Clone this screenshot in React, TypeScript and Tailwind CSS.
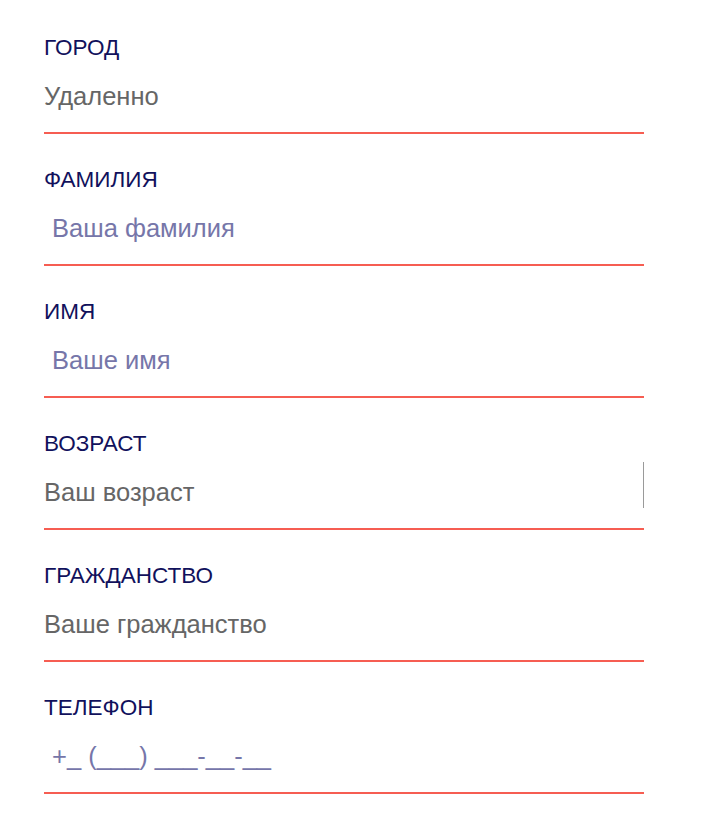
import React from "react";

type Field = {
  label: string;
  value?: string;
  placeholder?: string;
  indent?: boolean;
  divider?: boolean;
};

const fields: Field[] = [
  { label: "ГОРОД", value: "Удаленно" },
  { label: "ФАМИЛИЯ", placeholder: "Ваша фамилия", indent: true },
  { label: "ИМЯ", placeholder: "Ваше имя", indent: true },
  { label: "ВОЗРАСТ", value: "Ваш возраст", divider: true },
  { label: "ГРАЖДАНСТВО", value: "Ваше гражданство" },
  { label: "ТЕЛЕФОН", placeholder: "+_ (___) ___-__-__", indent: true },
];

export default function App() {
  return (
    <div
      className="min-h-[817px] w-full bg-white pt-[2px] pl-[44px]"
      style={{ fontFamily: '"Liberation Sans", Arial, sans-serif' }}
    >
      <div className="flex w-[600px] flex-col">
        {fields.map((f) => (
          <div
            key={f.label}
            className="relative flex h-[132px] flex-col border-b-2 border-[#f65d52] pt-[33px]"
          >
            <div className="h-[26px] text-[22.5px] leading-[26px] text-[#11115c]">
              {f.label}
            </div>
            <input
              readOnly
              defaultValue={f.value}
              placeholder={f.placeholder}
              className={`mt-[12px] h-[46px] w-full bg-transparent text-[25.5px] text-[#666666] outline-none placeholder:text-[#7676a9] ${
                f.indent ? "pl-2" : "pl-0"
              }`}
              style={{ fontFamily: '"Liberation Sans", Arial, sans-serif' }}
            />
            {f.divider && (
              <div className="absolute right-0 top-[64px] h-[46px] w-px bg-[#9a9a9a]" />
            )}
          </div>
        ))}
      </div>
    </div>
  );
}
